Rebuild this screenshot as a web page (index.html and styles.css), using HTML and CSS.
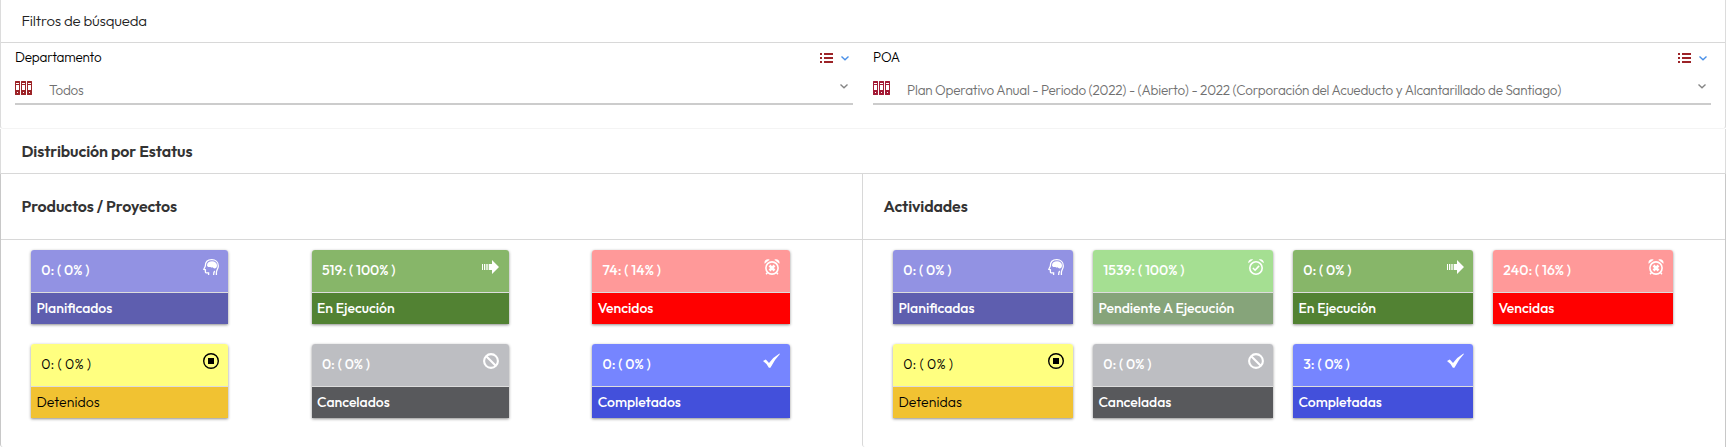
FILE: index.html
```
<!DOCTYPE html>
<html lang="es">
<head>
<meta charset="utf-8">
<title>Distribución por Estatus</title>
<link rel="stylesheet" href="styles.css">
</head>
<body>
<svg class="sprite" aria-hidden="true">
  <symbol id="binders" viewBox="0 0 18 14"><path fill="currentColor" fill-rule="evenodd" d="M.5 0h4q.5 0 .5.500v13q0 .5-.5.500h-4q-.5 0-.5-.5V.5Q0 0 .5 0zM1 2v1h3V2zM1 4v5h3V4zM2 11v1h1v-1zM6.500 0h4q.5 0 .5.500v13q0 .5-.5.500h-4q-.5 0-.5-.5V.5q0-.5.500-.5zM7 2v1h3V2zM7 4v5h3V4zM8 11v1h1v-1zM12.500 0h4q.5 0 .5.500v13q0 .5-.5.500h-4q-.5 0-.5-.5V.5q0-.5.500-.5zM13 2v1h3V2zM13 4v5h3V4zM14 11v1h1v-1z"/></symbol>
  <symbol id="list" viewBox="0 0 13 10"><path fill="currentColor" d="M0 0h2v2H0zM4 0h9v2H4zM0 4h2v2H0zM4 4h9v2H4zM0 8h2v2H0zM4 8h9v2H4z"/></symbol>
  <symbol id="down" viewBox="0 0 8 5"><path fill="none" stroke="currentColor" stroke-width="1.400" d="M.5.6 4 3.800 7.500.600"/></symbol>
  <symbol id="head" viewBox="0 0 16 16"><path fill="none" stroke="currentColor" stroke-width="1.300" d="M5.600 16v-2.200H3.200q-.8 0-.8-.8v-2.200L.8 10.300 2.300 7.200C2.300 3 5 .7 8.800.7c3.800 0 6.500 2.600 6.500 6.200 0 3-1.900 4.200-1.900 6.600V16M10.600 16c0-2 .2-3 1.100-4"/><path fill="currentColor" d="M4 6.200C4 3.700 6.200 2.200 9 2.200c3 0 5 1.800 5 4.300 0 1.900-1 2.900-2.500 2.900-.8 0-1.200-.4-1.700-1.200C8.700 9 7.900 8.300 7.500 7.900 5.400 8.400 4 7.600 4 6.200z"/></symbol>
  <symbol id="arrow" viewBox="0 0 17 16"><path fill="currentColor" d="M0 5h1v6H0zM2 5h1.300v6H2zM4.300 5h1.400v6H4.300zM6.700 5H10V1l7 7-7 7v-4H6.700z"/></symbol>
  <symbol id="alarm-x" viewBox="0 0 16 16"><g fill="none" stroke="currentColor"><circle cx="8" cy="9" r="6.100" stroke-width="1.600"/><path stroke-width="2.500" d="m5.500 6.500 5 5m0-5-5 5"/><path stroke-width="1.500" d="m3.600 13.400-1.500 1.900m10.300-1.900 1.500 1.900"/></g><path fill="currentColor" d="M.6 4.700C-.2 2 2.500-.7 5.700.8zM15.400 4.700c.8-2.700-1.900-5.400-5.100-3.900z"/></symbol>
  <symbol id="alarm-check" viewBox="0 0 16 16"><g fill="none" stroke="currentColor" stroke-width="1.600"><circle cx="8" cy="9" r="6.200"/><path d="m4.900 9 2.200 2.200 4-4.300"/></g><path fill="currentColor" d="M.3 4.300C-.1 1.700 2.200-.4 5.200.6zM15.700 4.300c.4-2.600-1.900-4.700-4.900-3.700z"/></symbol>
  <symbol id="stop" viewBox="0 0 16 16"><circle cx="8" cy="8" r="7.300" fill="none" stroke="currentColor" stroke-width="1.400"/><path fill="currentColor" d="M5 5h6v6H5z"/></symbol>
  <symbol id="ban" viewBox="0 0 16 16"><g fill="none" stroke="currentColor" stroke-width="2.100"><circle cx="8" cy="8" r="6.900"/><path d="m3 3 10 10"/></g></symbol>
  <symbol id="check" viewBox="0 0 17 16"><path fill="currentColor" d="M0 8 2.800 6.500 6 9.900Q10.500 3.900 16.500.5l.4.5Q11.600 6.500 7.400 14.800H5.900Q3.400 10.100 0 8z"/></symbol>
</svg>

<section class="filters">
  <h2 class="bar bar-light">Filtros de búsqueda</h2>
  <div class="fields">
    <div class="field">
      <div class="field-head"><span class="label">Departamento</span><svg class="i-list"><use href="#list"/></svg><svg class="i-down blue"><use href="#down"/></svg></div>
      <div class="select"><svg class="i-binders"><use href="#binders"/></svg><span class="value">Todos</span><svg class="i-down"><use href="#down"/></svg></div>
    </div>
    <div class="field">
      <div class="field-head"><span class="label">POA</span><svg class="i-list"><use href="#list"/></svg><svg class="i-down blue"><use href="#down"/></svg></div>
      <div class="select"><svg class="i-binders crimson"><use href="#binders"/></svg><span class="value">Plan Operativo Anual - Periodo (2022) - (Abierto) - 2022 (Corporación del Acueducto y Alcantarillado de Santiago)</span><svg class="i-down"><use href="#down"/></svg></div>
    </div>
  </div>
</section>

<section class="status">
  <h2 class="bar bar-bold">Distribución por Estatus</h2>
  <div class="panels">
    <div class="panel">
      <h3 class="panel-title">Productos / Proyectos</h3>
      <div class="cards cards-3">
        <div class="card planned"><div class="top"><span class="count">0: ( 0% )</span><svg class="icon"><use href="#head"/></svg></div><div class="name">Planificados</div></div>
        <div class="card running"><div class="top"><span class="count">519: ( 100% )</span><svg class="icon wide"><use href="#arrow"/></svg></div><div class="name">En Ejecución</div></div>
        <div class="card expired"><div class="top"><span class="count">74: ( 14% )</span><svg class="icon"><use href="#alarm-x"/></svg></div><div class="name">Vencidos</div></div>
        <div class="card stopped"><div class="top"><span class="count">0: ( 0% )</span><svg class="icon"><use href="#stop"/></svg></div><div class="name">Detenidos</div></div>
        <div class="card canceled"><div class="top"><span class="count">0: ( 0% )</span><svg class="icon"><use href="#ban"/></svg></div><div class="name">Cancelados</div></div>
        <div class="card done"><div class="top"><span class="count">0: ( 0% )</span><svg class="icon wide"><use href="#check"/></svg></div><div class="name">Completados</div></div>
      </div>
    </div>
    <div class="panel panel-right">
      <h3 class="panel-title">Actividades</h3>
      <div class="cards cards-4">
        <div class="card planned"><div class="top"><span class="count">0: ( 0% )</span><svg class="icon"><use href="#head"/></svg></div><div class="name">Planificadas</div></div>
        <div class="card pending"><div class="top"><span class="count">1539: ( 100% )</span><svg class="icon"><use href="#alarm-check"/></svg></div><div class="name">Pendiente A Ejecución</div></div>
        <div class="card running"><div class="top"><span class="count">0: ( 0% )</span><svg class="icon wide"><use href="#arrow"/></svg></div><div class="name">En Ejecución</div></div>
        <div class="card expired"><div class="top"><span class="count">240: ( 16% )</span><svg class="icon"><use href="#alarm-x"/></svg></div><div class="name">Vencidas</div></div>
        <div class="card stopped"><div class="top"><span class="count">0: ( 0% )</span><svg class="icon"><use href="#stop"/></svg></div><div class="name">Detenidas</div></div>
        <div class="card canceled"><div class="top"><span class="count">0: ( 0% )</span><svg class="icon"><use href="#ban"/></svg></div><div class="name">Canceladas</div></div>
        <div class="card done"><div class="top"><span class="count">3: ( 0% )</span><svg class="icon wide"><use href="#check"/></svg></div><div class="name">Completadas</div></div>
      </div>
    </div>
  </div>
</section>
</body>
</html>
```
FILE: styles.css
```
* { box-sizing: border-box; }
body { margin: 0; height: 447px; overflow: hidden; background: #fff; font-family: Outfit, Lato, "Open Sans", sans-serif; color: #000; }
h2, h3 { margin: 0; }
svg { display: block; flex: none; }
.sprite { display: none; }

.filters { height: 129px; border: 1px solid #dcdcdc; border-top: 0; border-bottom-color: #f4f4f4; border-radius: 0 0 3px 3px; }
.bar { padding-left: 20.5px; border-bottom: 1px solid #d8d8d8; color: #333; white-space: nowrap; }
.bar-light { height: 43px; line-height: 42px; font-size: 15px; font-weight: 300; letter-spacing: -.2px; color: #222; }
.bar-bold { height: 45px; line-height: 45px; font-size: 16px; font-weight: 600; letter-spacing: -.1px; }

.fields { display: grid; grid-template-columns: 838px 838px; gap: 20px; padding-left: 14px; }
.field-head { display: flex; align-items: center; height: 30px; padding: 0 4px 0 0; }
.label { flex: 1; padding-bottom: 2px; font-size: 13.5px; font-weight: 300; letter-spacing: -.22px; }
.i-list { width: 13px; height: 10px; color: #9c2327; }
.i-down { width: 8px; height: 5px; color: #858585; }
.blue { margin-left: 8px; color: #4a90e8; }
.select { display: flex; align-items: center; height: 32px; padding: 0 5px 1px 0; border-bottom: 2px solid #ccc; }
.select .i-down { margin-bottom: 2px; }
.i-binders { width: 18px; height: 14px; color: #9c2327; }
.crimson { color: #a31a35; }
.value { flex: 1; padding: 5px 0 0 16px; font-size: 13.5px; font-weight: 300; letter-spacing: -.22px; color: #707070; white-space: nowrap; }

.status { height: 318px; }
.bar-bold { border-left: 1px solid #dcdcdc; border-right: 1px solid #dcdcdc; }
.panels { display: grid; grid-template-columns: 862px 864px; height: 273px; }
.panel { border-left: 1px solid #c8c8c8; border-radius: 0 0 0 3px; }
.panel-right { border-left-color: #d8d8d8; border-right: 1px solid #c8c8c8; }
.panel-title { height: 66px; padding-left: 20.5px; border-bottom: 1px solid #d8d8d8; font-size: 16px; font-weight: 600; line-height: 65px; letter-spacing: -.1px; color: #333; }

.cards { display: grid; row-gap: 20px; padding: 10px 0 0 30px; }
.cards-3 { grid-template-columns: repeat(3, 197.33px); column-gap: 83.3px; }
.cards-4 { grid-template-columns: repeat(4, 180px); column-gap: 20px; }
.card { height: 74px; border-radius: 3px 3px 0 0; box-shadow: 0 1px 3px rgba(0,0,0,.45); color: #fff; font-weight: 500; font-size: 14px; white-space: nowrap; }
.top { display: flex; justify-content: space-between; height: 43px; padding: 9px 9.5px 0 10.3px; border-bottom: 1px solid #ddd; border-radius: 3px 3px 0 0; }
.count { line-height: 22px; }
.icon { width: 16px; height: 16px; }
.wide { width: 17px; }
.name { height: 31px; padding-left: 5.4px; line-height: 31px; }
.planned .top { background: #9292e3; } .planned .name { background: #5e5eaf; }
.pending .top { background: #a5df92; } .pending .name { background: #86a47a; }
.running .top { background: #87b669; } .running .name { background: #528233; }
.expired .top { background: #ff9999; } .expired .name { background: #ff0000; }
.stopped { color: #000; font-weight: 300; letter-spacing: .1px; }
.stopped .top { background: #ffff80; } .stopped .name { background: #f1c232; }
.canceled .top { background: #bdbec2; } .canceled .name { background: #58595c; }
.done .top { background: #7685ff; } .done .name { background: #4350db; }
```
